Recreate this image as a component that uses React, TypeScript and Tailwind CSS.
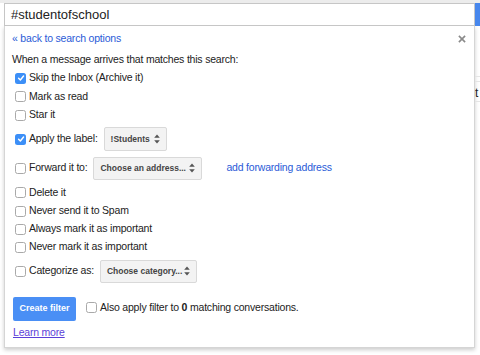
import React from "react";

function Box({ checked = false }: { checked?: boolean }) {
  if (checked) {
    return (
      <span className="inline-flex h-[11px] w-[11px] shrink-0 items-center justify-center rounded-[2.5px] bg-[#3c8ff7]">
        <svg width="8" height="8" viewBox="0 0 10 10">
          <path d="M2 5.2 L4.2 7.4 L8.2 2.6" fill="none" stroke="#fff" strokeWidth="1.8" strokeLinecap="round" strokeLinejoin="round" />
        </svg>
      </span>
    );
  }
  return <span className="inline-block h-[11px] w-[11px] shrink-0 rounded-[2.5px] border border-[#a9a9a9] bg-white" />;
}

function Arrows() {
  return (
    <svg width="6" height="10" viewBox="0 0 6 10" className="shrink-0">
      <path d="M3 0.5 L5.8 3.8 L0.2 3.8 Z" fill="#555" />
      <path d="M3 9.5 L5.8 6.2 L0.2 6.2 Z" fill="#555" />
    </svg>
  );
}

function Select({ label, w, h }: { label: string; w: string; h: string }) {
  return (
    <span className={`inline-flex items-center justify-between whitespace-nowrap rounded-[2px] border border-[#d9d9d9] bg-[#f3f3f3] pl-[6px] pr-[6px] text-[8.5px] font-bold tracking-normal text-[#444] ${w} ${h}`}>
      <span>{label}</span>
      <Arrows />
    </span>
  );
}

function Row({ checked, children, className = "" }: { checked?: boolean; children: React.ReactNode; className?: string }) {
  return (
    <div className={`flex items-center gap-[3px] whitespace-nowrap pl-[10px] ${className}`}>
      <Box checked={checked} />
      {children}
    </div>
  );
}

export default function App() {
  return (
    <div className="relative h-[355px] w-[480px] overflow-hidden bg-white text-[#222]" style={{ fontFamily: '"Liberation Sans", Arial, sans-serif' }}>
      <div className="h-[3px] bg-[#ececec]" />
      <div className="flex h-[23px] pl-[4px]">
        <div className="flex flex-1 items-center border border-[#c6c6c6] bg-white pl-[6px] text-[13px] text-[#222]">#studentofschool</div>
        <div className="w-[5px] bg-[#4787ed]" />
      </div>
      <div className="absolute right-0 top-[26px] w-[5px]">
        <div className="h-[50px]" />
        <div className="h-px bg-[#e5e5e5]" />
        <div className="h-[4px]" />
        <div className="h-px bg-[#e5e5e5]" />
        <div className="h-[19px] overflow-hidden pt-[2px] text-[12px] text-[#222]">t</div>
        <div className="h-px bg-[#e5e5e5]" />
      </div>
      <div className="ml-[4px] h-[322px] w-[471px] border-x border-b border-[#d5d5d5] bg-white tracking-[-0.2px] shadow-[0_2px_4px_rgba(0,0,0,0.2)]">
        <div className="flex h-[26px] items-center justify-between pl-[7px] pr-[8px]">
          <span className="text-[10.5px] text-[#2a5bd7]">« back to search options</span>
          <svg width="8" height="8" viewBox="0 0 9 9">
            <path d="M1 1 L8 8 M8 1 L1 8" stroke="#8a8a8a" strokeWidth="1.8" />
          </svg>
        </div>
        <div className="flex h-[16px] items-center pl-[7px] text-[10.5px] text-[#222]">When a message arrives that matches this search:</div>
        <div className="flex flex-col text-[10.5px] text-[#222]">
          <Row checked className="mt-[1px] h-[18px]"><span>Skip the Inbox (Archive it)</span></Row>
          <Row className="h-[19px]"><span>Mark as read</span></Row>
          <Row className="h-[18px]"><span>Star it</span></Row>
          <Row checked className="mt-[2px] h-[26px]">
            <span>Apply the label:</span>
            <span className="ml-[3px] flex"><Select label="!Students" w="w-[63px]" h="h-[24px]" /></span>
          </Row>
          <Row className="mt-[3px] h-[26px]">
            <span>Forward it to:</span>
            <span className="ml-[3px] flex"><Select label="Choose an address..." w="w-[109px]" h="h-[23px]" /></span>
            <span className="ml-[21px] text-[#2a5bd7]">add forwarding address</span>
          </Row>
          <Row className="mt-[2px] h-[19px]"><span>Delete it</span></Row>
          <Row className="h-[18px]"><span>Never send it to Spam</span></Row>
          <Row className="h-[18px]"><span>Always mark it as important</span></Row>
          <Row className="h-[18px]"><span>Never mark it as important</span></Row>
          <Row className="mt-[3px] h-[24px]">
            <span>Categorize as:</span>
            <span className="ml-[3px] flex"><Select label="Choose category..." w="w-[97px]" h="h-[23px]" /></span>
          </Row>
        </div>
        <div className="mt-[14px] flex items-start pl-[8px]">
          <div className="flex h-[24px] w-[63px] items-center justify-center rounded-[2px] bg-[#4a8ff5] text-[9px] font-bold tracking-normal text-white">Create filter</div>
          <div className="ml-[10px] mt-[3px] flex items-center gap-[3px] whitespace-nowrap text-[10.5px] text-[#222]">
            <Box />
            <span>Also apply filter to <b>0</b> matching conversations.</span>
          </div>
        </div>
        <div className="pl-[8px] pt-[4px] text-[10.5px] leading-[14px] text-[#5b3fd8] underline">Learn more</div>
      </div>
    </div>
  );
}
